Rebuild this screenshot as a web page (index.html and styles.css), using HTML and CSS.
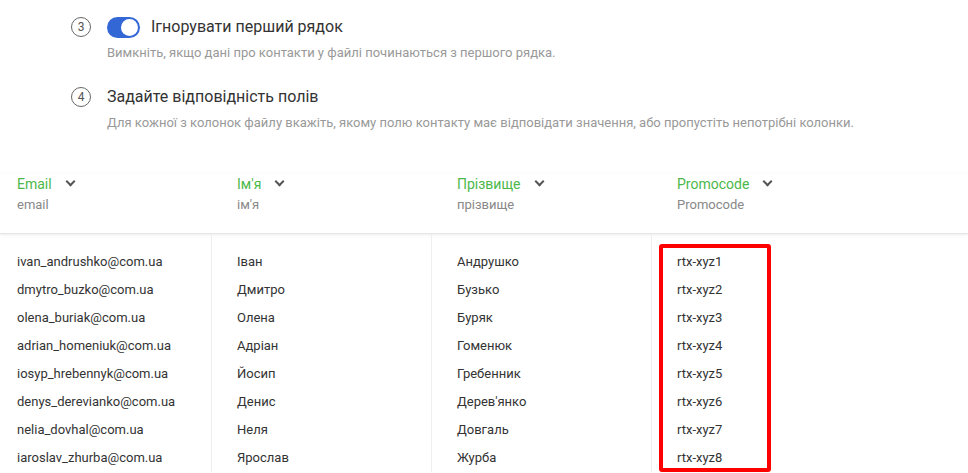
FILE: index.html
```html
<!DOCTYPE html>
<html lang="uk">
<head>
    <meta charset="UTF-8">
    <title>Імпорт контактів</title>
    <link rel="stylesheet" href="styles.css">
</head>
<body>
    <div class="steps">
        <div class="step">
            <div class="step-num">3</div>
            <div class="step-body">
                <div class="step-title">
                    <span class="toggle"><span class="knob"></span></span>
                    Ігнорувати перший рядок
                </div>
                <p class="step-hint">Вимкніть, якщо дані про контакти у файлі починаються з першого рядка.</p>
            </div>
        </div>
        <div class="step">
            <div class="step-num">4</div>
            <div class="step-body">
                <div class="step-title">Задайте відповідність полів</div>
                <p class="step-hint">Для кожної з колонок файлу вкажіть, якому полю контакту має відповідати значення, або пропустіть непотрібні колонки.</p>
            </div>
        </div>
    </div>

    <div class="mapping">
        <div class="map-head">
            <div class="col">
                <div class="field">Email <span class="chev"></span></div>
                <div class="source">email</div>
            </div>
            <div class="col">
                <div class="field">Ім'я <span class="chev"></span></div>
                <div class="source">ім'я</div>
            </div>
            <div class="col">
                <div class="field">Прізвище <span class="chev"></span></div>
                <div class="source">прізвище</div>
            </div>
            <div class="col">
                <div class="field">Promocode <span class="chev"></span></div>
                <div class="source">Promocode</div>
            </div>
        </div>
        <div class="map-body">
            <div class="col">
                <div class="cell">ivan_andrushko@com.ua</div>
                <div class="cell">dmytro_buzko@com.ua</div>
                <div class="cell">olena_buriak@com.ua</div>
                <div class="cell">adrian_homeniuk@com.ua</div>
                <div class="cell">iosyp_hrebennyk@com.ua</div>
                <div class="cell">denys_derevianko@com.ua</div>
                <div class="cell">nelia_dovhal@com.ua</div>
                <div class="cell">iaroslav_zhurba@com.ua</div>
            </div>
            <div class="col">
                <div class="cell">Іван</div>
                <div class="cell">Дмитро</div>
                <div class="cell">Олена</div>
                <div class="cell">Адріан</div>
                <div class="cell">Йосип</div>
                <div class="cell">Денис</div>
                <div class="cell">Неля</div>
                <div class="cell">Ярослав</div>
            </div>
            <div class="col">
                <div class="cell">Андрушко</div>
                <div class="cell">Бузько</div>
                <div class="cell">Буряк</div>
                <div class="cell">Гоменюк</div>
                <div class="cell">Гребенник</div>
                <div class="cell">Дерев'янко</div>
                <div class="cell">Довгаль</div>
                <div class="cell">Журба</div>
            </div>
            <div class="col col-marked">
                <!-- highlight over the promocode values -->
                <div class="highlight"></div>
                <div class="cell">rtx-xyz1</div>
                <div class="cell">rtx-xyz2</div>
                <div class="cell">rtx-xyz3</div>
                <div class="cell">rtx-xyz4</div>
                <div class="cell">rtx-xyz5</div>
                <div class="cell">rtx-xyz6</div>
                <div class="cell">rtx-xyz7</div>
                <div class="cell">rtx-xyz8</div>
            </div>
        </div>
    </div>
</body>
</html>
```

FILE: styles.css
```css
body {
    margin: 0;
    padding: 0;
    font-family: Roboto, "Liberation Sans", Arial, sans-serif;
    color: #333;
    background: #fff;
    overflow: hidden;
}
.steps {
    padding: 16px 0 0 71px;
}
.step {
    display: flex;
    gap: 16px;
    margin-bottom: 24px;
}
.step-num {
    width: 18px;
    height: 18px;
    border: 1px solid #666;
    border-radius: 50%;
    font-size: 12px;
    line-height: 18px;
    text-align: center;
    color: #555;
    flex-shrink: 0;
    margin-top: 1px;
}
.step-title {
    display: flex;
    align-items: center;
    gap: 11px;
    font-size: 16px;
    line-height: 22px;
    color: #333;
}
.toggle {
    position: relative;
    width: 33px;
    height: 21px;
    border-radius: 11px;
    background-color: #3367d6;
}
.knob {
    position: absolute;
    top: 2px;
    right: 2px;
    width: 17px;
    height: 17px;
    border-radius: 50%;
    background-color: #fff;
}
.step-hint {
    margin: 6px 0 0;
    font-size: 13px;
    line-height: 18px;
    color: #999;
}
.mapping {
    margin-top: 42px;
}
.map-head,
.map-body {
    display: grid;
    grid-template-columns: 211px 220px 220px 1fr;
}
.map-head {
    border-bottom: 1px solid #e6e6e6;
    box-shadow: 0 1px 3px rgba(0, 0, 0, 0.08);
    padding-bottom: 18px;
}
.col {
    padding-left: 17px;
}
.col + .col {
    padding-left: 25px;
}
.map-head .col + .col {
    padding-left: 26px;
}
.map-body .col {
    padding-top: 14px;
}
.map-body .col + .col {
    border-left: 1px solid #eee;
}
.field {
    display: flex;
    align-items: center;
    font-size: 14px;
    line-height: 20px;
    color: #4cb84a;
}
.chev {
    width: 5px;
    height: 5px;
    margin-left: 15px;
    margin-top: -5px;
    border-right: 2.5px solid #555;
    border-bottom: 2.5px solid #555;
    transform: rotate(45deg);
}
.source {
    margin-top: 1px;
    font-size: 13px;
    line-height: 20px;
    color: #888;
}
.cell {
    font-size: 13px;
    line-height: 28px;
    color: #333;
}
.col-marked {
    position: relative;
}
.highlight {
    position: absolute;
    top: 10px;
    left: 7px;
    width: 104px;
    height: 220px;
    border: 4px solid #f00;
    border-radius: 3px;
}
```
